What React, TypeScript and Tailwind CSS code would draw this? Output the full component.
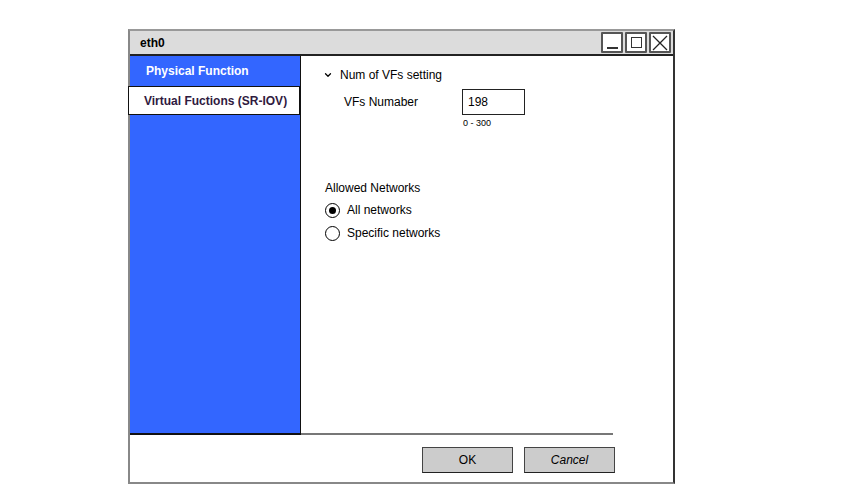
import { ChevronDown } from "lucide-react";

const font = { fontFamily: '"Liberation Sans", Arial, sans-serif' };

function TitleButton({ children }: { children: React.ReactNode }) {
  return (
    <div className="flex h-[21px] w-[22px] items-center justify-center rounded-[1px] border-2 border-[#555] bg-white">
      {children}
    </div>
  );
}

function Radio({ checked, label }: { checked?: boolean; label: string }) {
  return (
    <label className="flex h-[16px] items-center gap-[7px] text-[12px] leading-[16px] text-black">
      <span className="flex h-[15px] w-[15px] items-center justify-center rounded-full border-[1.5px] border-black bg-white">
        {checked && <span className="h-[7px] w-[7px] rounded-full bg-black" />}
      </span>
      {label}
    </label>
  );
}

export default function App() {
  return (
    <div className="h-[490px] w-[844px] bg-white pl-[128px] pt-[29px]" style={font}>
      <div className="flex h-[455px] w-[547px] flex-col border-2 border-r-[#333] border-[#888] border-t-[#999] bg-white">
        {/* title bar */}
        <div className="flex h-[25px] items-center justify-between border-b-2 border-[#222] bg-[#dcdcdc] pl-[10px] pr-[2px]">
          <span className="text-[12px] font-bold text-black">eth0</span>
          <div className="flex gap-[2px]">
            <TitleButton>
              <span className="mt-[10px] h-[2px] w-[11px] bg-[#333]" />
            </TitleButton>
            <TitleButton>
              <span className="h-[11px] w-[11px] border-[1.5px] border-[#333]" />
            </TitleButton>
            <TitleButton>
              <svg width="16" height="16" viewBox="0 0 16 16" fill="none" stroke="#222" strokeWidth="1.3">
                <path d="M1 1 L15 15 M15 1 L1 15" />
              </svg>
            </TitleButton>
          </div>
        </div>

        <div className="flex h-[379px]">
          {/* sidebar */}
          <div className="w-[171px] shrink-0 border-b-2 border-r-[1.5px] border-[#111] bg-[#3366ff]">
            <div className="flex h-[30px] items-center pl-[16px] text-[12px] font-bold text-white">Physical Function</div>
            <div className="-ml-[2px] flex h-[29px] items-center border-[1.5px] border-[#111] bg-white pl-[15px] text-[12px] font-bold text-[#301a40]">
              Virtual Fuctions (SR-IOV)
            </div>
          </div>

          {/* content */}
          <div className="mr-[60px] flex-1 border-b-2 border-[#777] pl-[22px] pt-[10px] text-black">
            <div className="flex items-center gap-[7px] text-[12px]">
              <ChevronDown className="h-[10px] w-[10px]" strokeWidth={3} />
              Num of VFs setting
            </div>
            <div className="mt-[5px] flex items-center pl-[21px]">
              <span className="w-[118px] text-[12px]">VFs Numaber</span>
              <div className="flex h-[26px] w-[63px] items-center border-[1.5px] border-[#222] pl-[5px] text-[12px]">198</div>
            </div>
            <div className="mt-[2px] pl-[140px] text-[9px] leading-[12px]">0 - 300</div>

            <div className="ml-[2px] mt-[50px] text-[12px]">Allowed Networks</div>
            <div className="ml-[2px] mt-[5px] flex flex-col gap-[7px]">
              <Radio checked label="All networks" />
              <Radio label="Specific networks" />
            </div>
          </div>
        </div>

        {/* footer */}
        <div className="mr-[58px] flex flex-1 items-start justify-end gap-[11px] pt-[12px]">
          <button className="h-[26px] w-[91px] border-[1.5px] border-[#444] border-b-[#222] bg-[#cccccc] text-[12px] text-black">OK</button>
          <button className="h-[26px] w-[91px] border-[1.5px] border-[#444] border-b-[#222] bg-[#cccccc] text-[12px] italic text-black">Cancel</button>
        </div>
      </div>
    </div>
  );
}
